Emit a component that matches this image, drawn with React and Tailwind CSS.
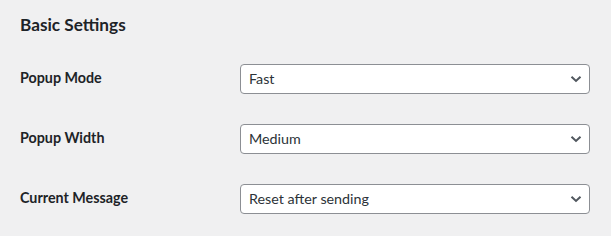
import React from "react";

const rows = [
  { label: "Popup Mode", value: "Fast" },
  { label: "Popup Width", value: "Medium" },
  { label: "Current Message", value: "Reset after sending" },
];

function Chevron() {
  return (
    <svg width="12" height="8" viewBox="0 0 12 8" className="shrink-0">
      <path d="M1.5 1.8 L6 6 L10.5 1.8" fill="none" stroke="#50575e" strokeWidth="2" strokeLinecap="butt" />
    </svg>
  );
}

export default function App() {
  return (
    <div
      className="w-[611px] h-[236px] bg-[#f0f0f1] text-[#1d2327] pl-5"
      style={{ fontFamily: 'Lato, "Noto Sans", sans-serif' }}
    >
      <div className="h-[49px] pt-[13px]">
        <h2 className="text-[17.2px] leading-[23px] font-bold">Basic Settings</h2>
      </div>
      {rows.map((r) => (
        <div key={r.label} className="flex h-[60px] items-center">
          <div className="w-[220px] text-[14.3px] font-bold leading-5 -mt-[3px]">{r.label}</div>
          <div className="w-[350px] h-[30px] bg-white border border-[#8c8f94] rounded-[4px] flex items-center justify-between pl-2 pr-[7px]">
            <span className="text-[14.3px] text-[#2c3338]">{r.value}</span>
            <Chevron />
          </div>
        </div>
      ))}
    </div>
  );
}
